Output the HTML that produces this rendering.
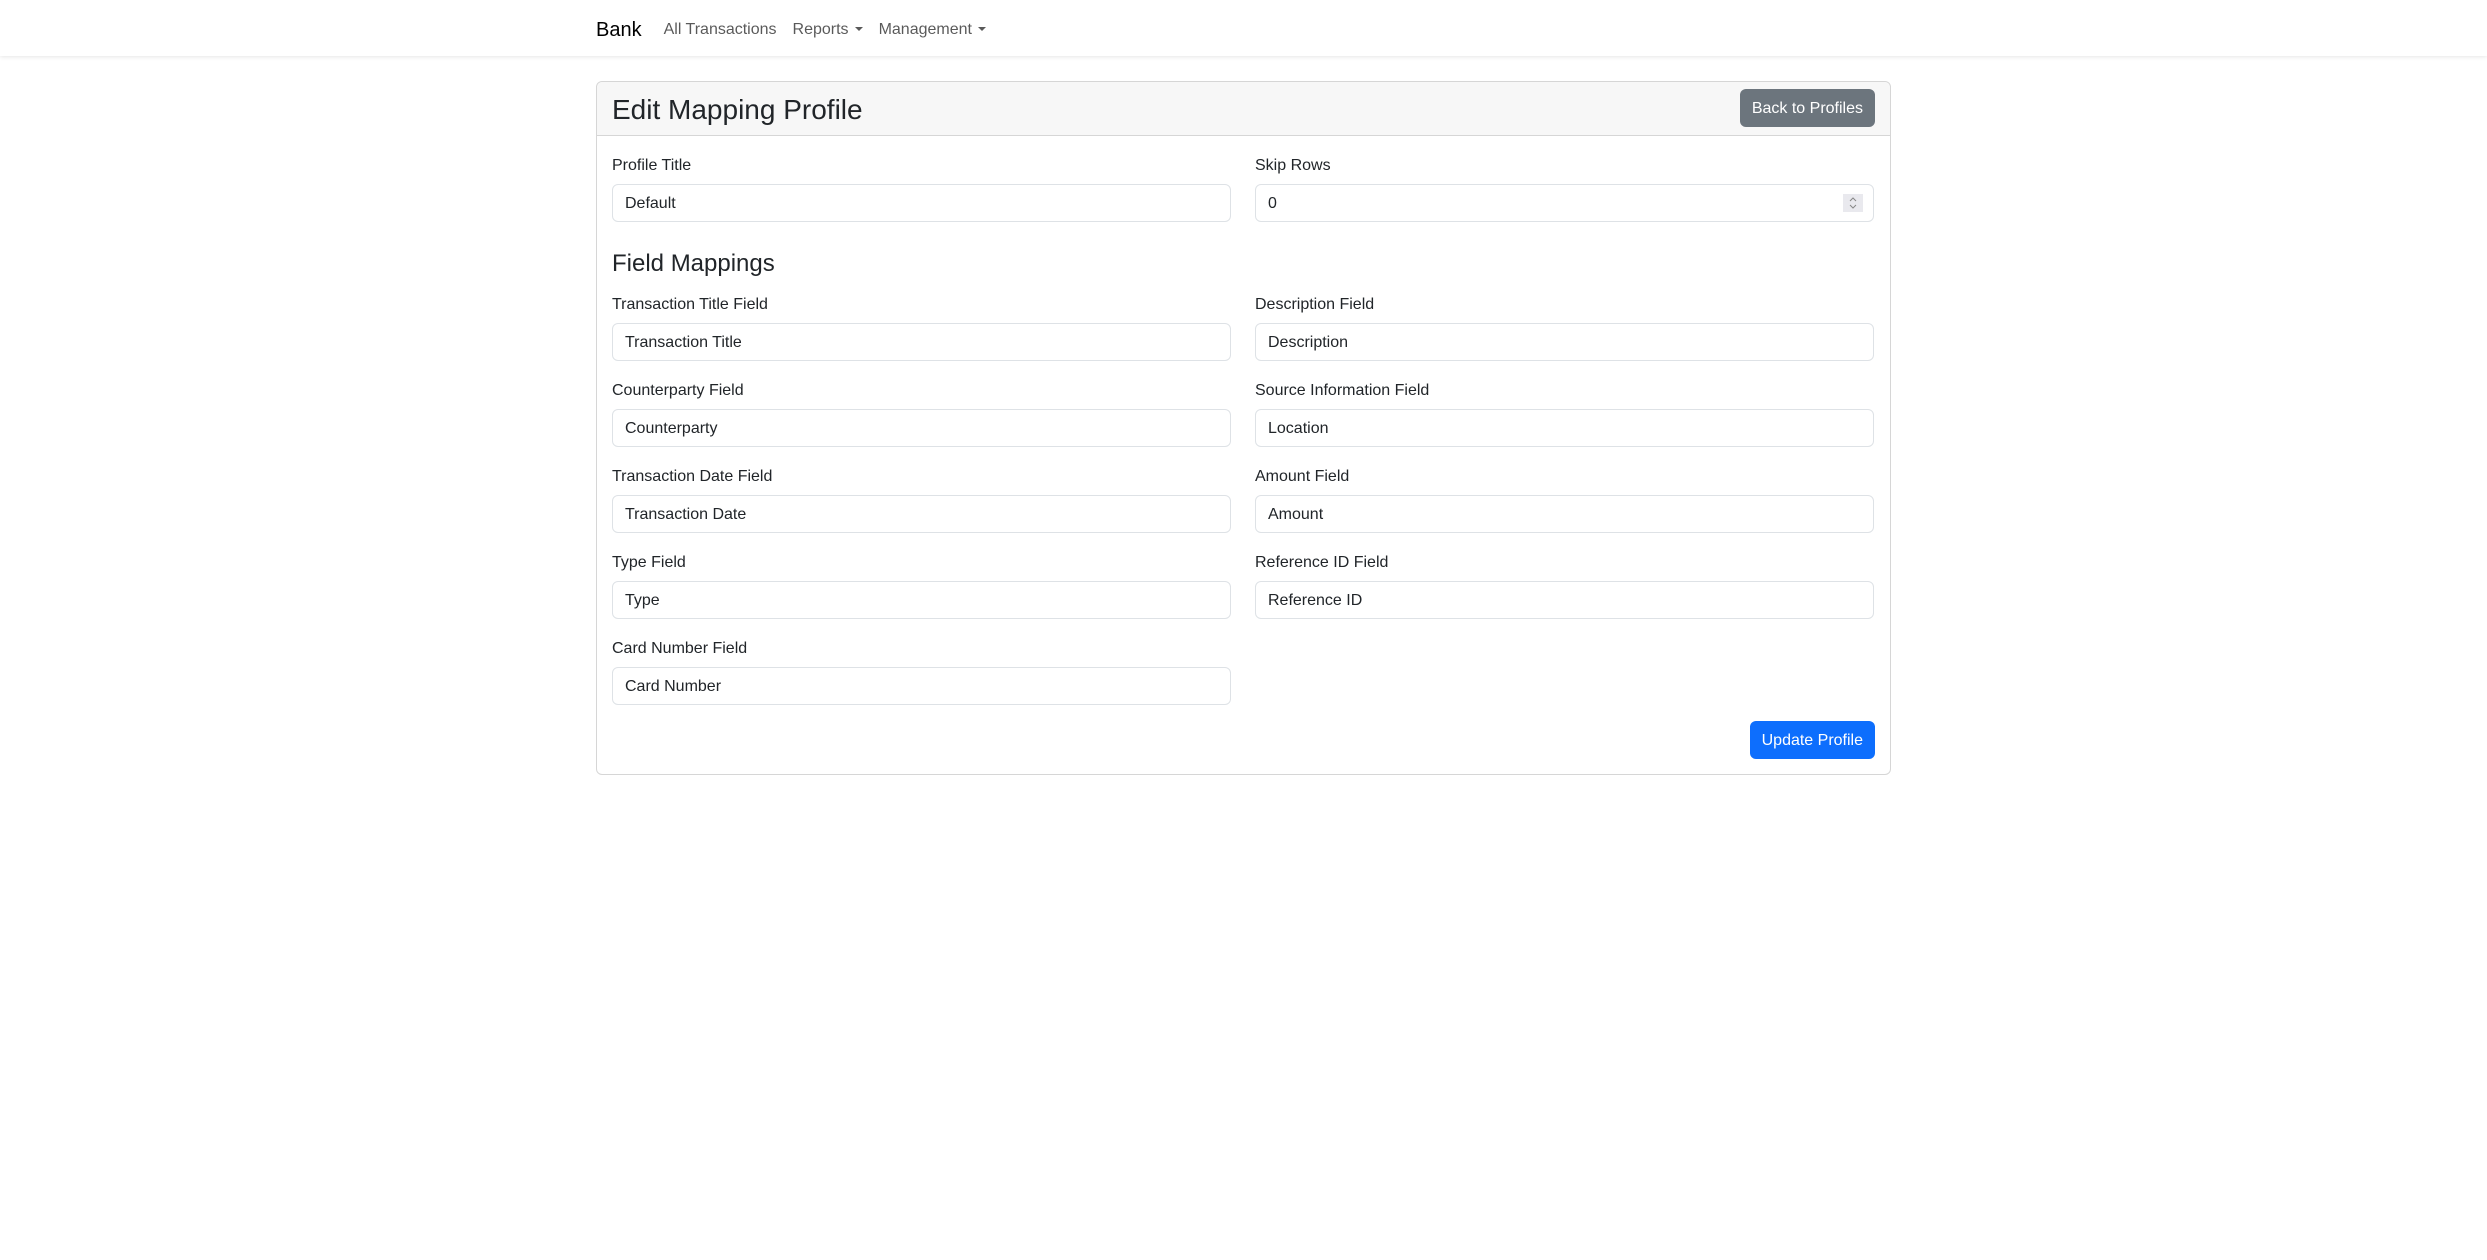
<!DOCTYPE html>
<html><head><meta charset="utf-8"><style>
*{box-sizing:border-box}
body{margin:0;background:#fff;font-family:"Liberation Sans",Arial,sans-serif;font-size:16px;color:#212529;width:2487px;height:1260px;overflow:hidden}
.nav{height:56px;box-shadow:0 1px 4px rgba(0,0,0,.1);position:relative}
.navin{position:absolute;left:596px;top:2px;height:56px;display:flex;align-items:center}
.brand{font-size:20px;color:#000;margin-right:14px}
.link{color:rgba(0,0,0,.65);padding:0 8px;font-size:16px}
.caret{display:inline-block;width:0;height:0;border-left:4px solid transparent;border-right:4px solid transparent;border-top:4px solid rgba(0,0,0,.65);vertical-align:3px;margin-left:6px}
.card{position:absolute;left:596px;top:81px;width:1295px;height:694px;border:1px solid #d6d6d6;border-radius:6px}
.hdr{height:54px;background:#f7f7f7;border-bottom:1px solid #d6d6d6;border-radius:6px 6px 0 0;position:relative}
.hdr h3{position:absolute;left:15px;top:11px;margin:0;font-size:28px;font-weight:500;line-height:34px}
.btn{position:absolute;border-radius:6px;color:#fff;font-size:16px;line-height:40px;height:38px;padding:0 12px}
.grey{background:#6c757d;right:15px;top:7px}
.blue{background:#0d6efd;right:15px;top:639px}
.lbl{position:absolute;font-size:16px;line-height:24px;margin-top:2px}
.inp{position:absolute;height:38px;width:619px;border:1px solid #dee2e6;border-radius:6px;padding:0 12px;line-height:38px}
h4{position:absolute;left:15px;top:167px;margin:0;font-size:24px;font-weight:500;line-height:29px}
.spin{position:absolute;right:10px;top:9px;width:20px;height:18px;background:#e9e9ee}
</style></head><body>
<div class="nav"><div class="navin"><span class="brand">Bank</span><span class="link">All Transactions</span><span class="link">Reports<span class="caret"></span></span><span class="link">Management<span class="caret"></span></span></div></div>
<div class="card">
<div class="hdr"><h3>Edit Mapping Profile</h3><span class="btn grey">Back to Profiles</span></div>
<div class="lbl" style="left:15px;top:70px">Profile Title</div>
<div class="inp" style="left:15px;top:102px">Default</div>
<div class="lbl" style="left:658px;top:70px">Skip Rows</div>
<div class="inp" style="left:658px;top:102px">0<svg class="spin" viewBox="0 0 20 18"><path d="M7 7 L10 4 L13 7 M7 11 L10 14 L13 11" fill="none" stroke="#888" stroke-width="1"/></svg></div>
<h4>Field Mappings</h4>

<div class="lbl" style="left:15px;top:209px">Transaction Title Field</div>
<div class="inp" style="left:15px;top:241px">Transaction Title</div>
<div class="lbl" style="left:658px;top:209px">Description Field</div>
<div class="inp" style="left:658px;top:241px">Description</div>

<div class="lbl" style="left:15px;top:295px">Counterparty Field</div>
<div class="inp" style="left:15px;top:327px">Counterparty</div>
<div class="lbl" style="left:658px;top:295px">Source Information Field</div>
<div class="inp" style="left:658px;top:327px">Location</div>

<div class="lbl" style="left:15px;top:381px">Transaction Date Field</div>
<div class="inp" style="left:15px;top:413px">Transaction Date</div>
<div class="lbl" style="left:658px;top:381px">Amount Field</div>
<div class="inp" style="left:658px;top:413px">Amount</div>

<div class="lbl" style="left:15px;top:467px">Type Field</div>
<div class="inp" style="left:15px;top:499px">Type</div>
<div class="lbl" style="left:658px;top:467px">Reference ID Field</div>
<div class="inp" style="left:658px;top:499px">Reference ID</div>

<div class="lbl" style="left:15px;top:553px">Card Number Field</div>
<div class="inp" style="left:15px;top:585px">Card Number</div>

<span class="btn blue">Update Profile</span>
</div>
</body></html>
